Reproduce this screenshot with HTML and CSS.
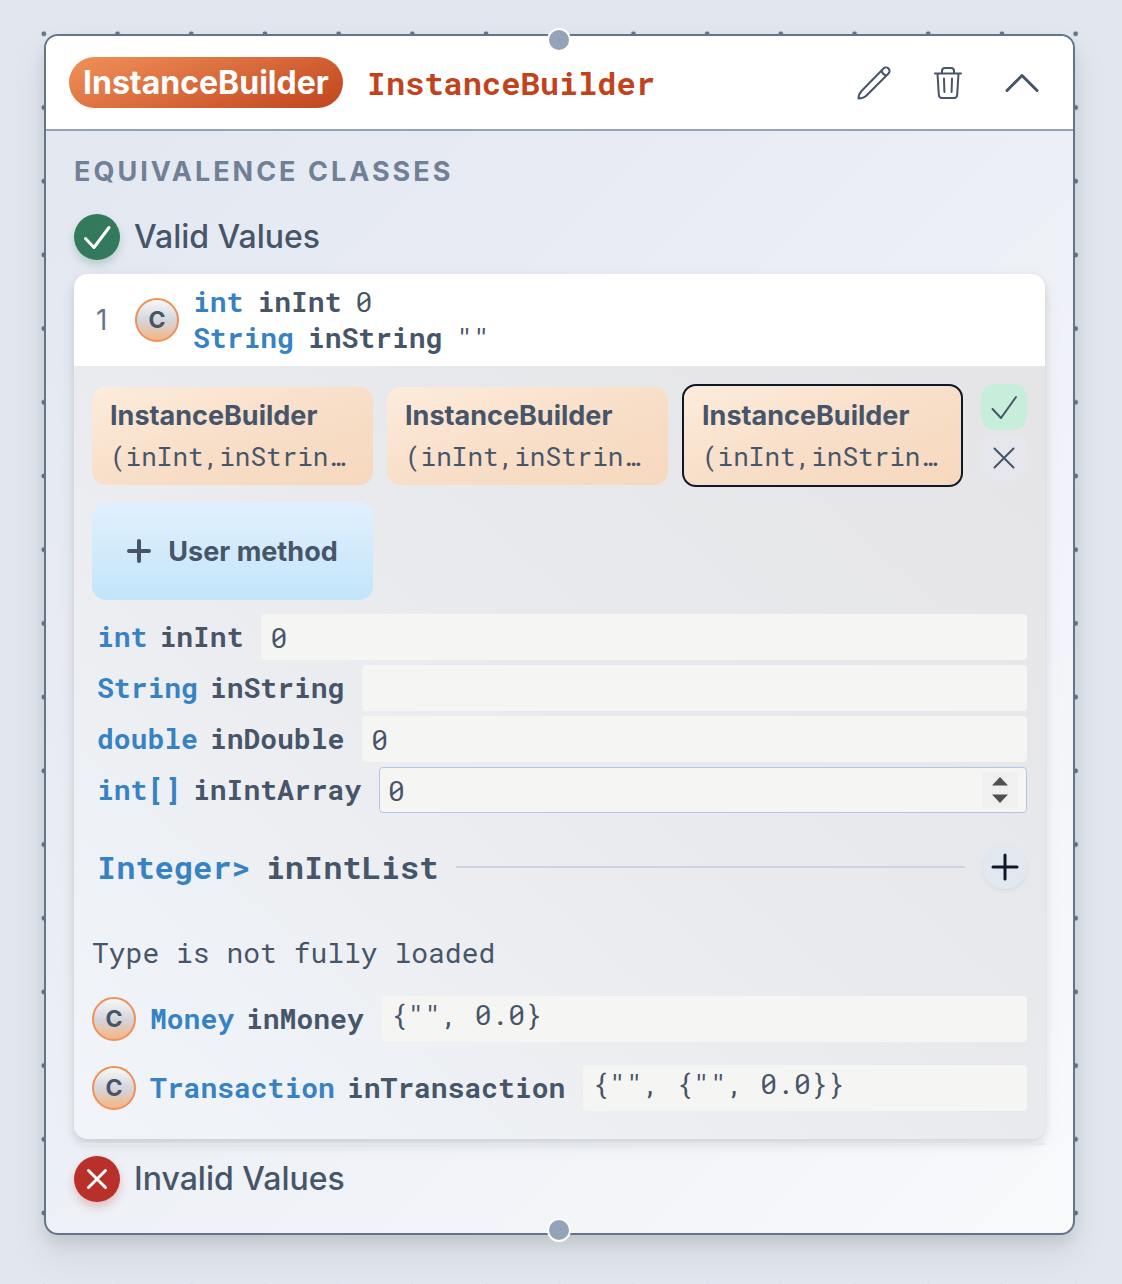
FILE: index.html
```html
<!DOCTYPE html>
<html lang="en">
<head>
<meta charset="utf-8">
<title>InstanceBuilder</title>
<meta name="viewport" content="width=device-width, initial-scale=1">
<link rel="stylesheet" href="styles.css">
</head>
<body>
<svg class="canvas-dots" aria-hidden="true">
  <defs>
    <pattern id="dots" width="40" height="40" patternUnits="userSpaceOnUse" patternTransform="translate(7 -3) scale(1.8425)">
      <circle cx="20" cy="20" r="1.3" fill="#64748b"/>
    </pattern>
  </defs>
  <rect width="100%" height="100%" fill="url(#dots)"/>
</svg>

<main class="node">
  <span class="handle handle-top"></span>
  <span class="handle handle-bottom"></span>

  <header class="node-header">
    <span class="badge">InstanceBuilder</span>
    <h1 class="node-title">InstanceBuilder</h1>
    <div class="tools">
      <button class="tool" type="button" aria-label="Edit">
        <svg viewBox="0 0 38 38" class="icon"><path d="M3.500 34.500c0-3 1-5.500 3.500-8L28.500 4.500a3.300 3.300 0 0 1 5 5L12 31c-2.500 2.500-5 3.500-8.500 3.500zM26.500 6.500c.5 2.500 2 4 4.500 5"/></svg>
      </button>
      <button class="tool" type="button" aria-label="Delete">
        <svg viewBox="0 0 38 38" class="icon"><path d="M6 9.500h26M8.500 9.500l1.300 21c.1 2.200 1.300 3.500 3.200 3.500h12c1.900 0 3.100-1.300 3.200-3.500l1.300-21M13 9.500V7c0-2 1-3 3-3h6c2 0 3 1 3 3v2.500M15 14.500l.4 13.500M23 14.500l-.4 13.500"/></svg>
      </button>
      <button class="tool" type="button" aria-label="Collapse">
        <svg viewBox="0 0 38 38" class="icon icon-bold"><path d="M4 26.500l15-15 15 15"/></svg>
      </button>
    </div>
  </header>

  <div class="node-body">
    <h2 class="section-title">EQUIVALENCE CLASSES</h2>

    <div class="group">
      <span class="status status-valid"><svg viewBox="0 0 46 46" class="icon"><path d="M11.500 24.500l8.500 9L35 13.500"/></svg></span>
      <h3 class="group-title">Valid Values</h3>
    </div>

    <section class="case">
      <div class="case-head">
        <span class="case-index">1</span>
        <span class="class-mark">C</span>
        <div class="summary">
          <div class="summary-line"><b class="type">int</b><b>inInt</b><span>0</span></div>
          <div class="summary-line"><b class="type">String</b><b>inString</b><span>""</span></div>
        </div>
      </div>

      <div class="case-body">
        <div class="picker">
          <div class="methods">
            <button class="method" type="button"><span class="method-name">InstanceBuilder</span><span class="method-args">(inInt,inStrin…</span></button>
            <button class="method" type="button"><span class="method-name">InstanceBuilder</span><span class="method-args">(inInt,inStrin…</span></button>
            <button class="method method-selected" type="button"><span class="method-name">InstanceBuilder</span><span class="method-args">(inInt,inStrin…</span></button>
            <button class="method method-user" type="button"><svg viewBox="0 0 24 24" class="icon icon-plus"><path d="M12 2v20M2 12h20"/></svg>User method</button>
          </div>
          <div class="actions">
            <button class="action action-accept" type="button" aria-label="Accept"><svg viewBox="0 0 46 46" class="icon"><path d="M11.500 25l8.500 9L35 13"/></svg></button>
            <button class="action" type="button" aria-label="Cancel"><svg viewBox="0 0 46 46" class="icon"><path d="M13.500 13.500l19 19M32.500 13.500l-19 19"/></svg></button>
          </div>
        </div>

        <form class="fields">
          <div class="field"><label class="param" for="in-int"><span class="type">int</span><span>inInt</span></label><input id="in-int" type="text" value="0"></div>
          <div class="field"><label class="param" for="in-string"><span class="type">String</span><span>inString</span></label><input id="in-string" type="text"></div>
          <div class="field"><label class="param" for="in-double"><span class="type">double</span><span>inDouble</span></label><input id="in-double" type="text" value="0"></div>
          <div class="field field-focus">
            <label class="param" for="in-array"><span class="type">int[]</span><span>inIntArray</span></label>
            <input id="in-array" type="text" inputmode="numeric" value="0">
            <span class="stepper"><svg viewBox="0 0 36 36"><path d="M10 13.500L18 5l8 8.500zM10 22.500L18 31l8-8.500z" fill="#505050"/></svg></span>
          </div>
        </form>

        <div class="list-row">
          <h4 class="param list-title"><span class="type">Integer&gt;</span><span>inIntList</span></h4>
          <span class="rule"></span>
          <button class="add" type="button" aria-label="Add item"><svg viewBox="0 0 44 44" class="icon icon-bold"><path d="M22 10v24M10 22h24"/></svg></button>
        </div>

        <p class="note">Type is not fully loaded</p>

        <div class="object-row"><span class="class-mark">C</span><div class="field object-field"><span class="param"><span class="type">Money</span><span>inMoney</span></span><output class="object-value">{"", 0.0}</output></div></div>
        <div class="object-row"><span class="class-mark">C</span><div class="field object-field"><span class="param"><span class="type">Transaction</span><span>inTransaction</span></span><output class="object-value">{"", {"", 0.0}}</output></div></div>
      </div>
    </section>

    <hr class="divider">

    <div class="group">
      <span class="status status-invalid"><svg viewBox="0 0 46 46" class="icon"><path d="M14.500 14.500l17 17M31.500 14.500l-17 17"/></svg></span>
      <h3 class="group-title">Invalid Values</h3>
    </div>
  </div>
</main>
</body>
</html>
```
FILE: styles.css
```css
:root {
  --ink: #475569;
  --blue: #3682c4;
  --sans: Inter, "Liberation Sans", sans-serif;
  --mono: "Roboto Mono", "DejaVu Sans Mono", "Liberation Mono", monospace;
}

* { box-sizing: border-box; }

body {
  margin: 0;
  padding: 34px 47px 48px 44px;
  background: #e2e7ef;
  color: var(--ink);
  font-family: var(--sans);
  font-size: 28px;
}

h1, h2, h3, h4, p { margin: 0; }

button {
  border: 0;
  padding: 0;
  background: none;
  color: inherit;
  font: inherit;
  cursor: pointer;
}

.canvas-dots {
  position: absolute;
  inset: 0;
  width: 100%;
  height: 100%;
}

.icon {
  display: block;
  width: 100%;
  height: 100%;
  fill: none;
  stroke: currentColor;
  stroke-width: 2;
  stroke-linecap: round;
  stroke-linejoin: round;
}

.icon-bold { stroke-width: 3; }

/* Node frame */
.node {
  position: relative;
  border: 2px solid #64748b;
  border-radius: 14px;
  background: linear-gradient(135deg, #e2e8f0, #e8ebf3 30%, #f8fafc);
  box-shadow: 0 9px 14px rgba(0, 0, 0, .08), 0 18px 36px rgba(0, 0, 0, .08);
}

.handle {
  position: absolute;
  left: 50%;
  width: 24px;
  height: 24px;
  margin-left: -13px;
  border: 2px solid #fff;
  border-radius: 50%;
  background: #94a3b8;
}

.handle-top { top: -8px; }
.handle-bottom { bottom: -9px; }

.node-header {
  display: flex;
  align-items: center;
  gap: 24px;
  height: 95px;
  padding: 0 32px 0 23px;
  border-bottom: 2px solid #94a3b8;
  border-radius: 12px 12px 0 0;
  background: #fff;
}

.badge {
  padding: 0 14px;
  border-radius: 26px;
  background: linear-gradient(160deg, #f19159, #c0441e);
  color: #fff;
  font-size: 32px;
  font-weight: 700;
  line-height: 51px;
}

.node-title {
  color: #c2421c;
  font-family: var(--mono);
  font-size: 32px;
  font-weight: 700;
}

.tools {
  display: flex;
  gap: 36px;
  margin-left: auto;
}

.tool {
  width: 38px;
  height: 38px;
}

.node-body { padding: 23px 28px 31px; }

.section-title {
  margin-bottom: 24px;
  color: #718096;
  font-size: 27px;
  font-weight: 700;
  letter-spacing: 3px;
  line-height: 36px;
}

.group {
  display: flex;
  align-items: center;
  gap: 14px;
}

.group-title {
  font-size: 32px;
  font-weight: 500;
  line-height: 46px;
}

.status {
  width: 46px;
  height: 46px;
  border-radius: 50%;
  color: #fff;
}

.status .icon { stroke-width: 3; }

.status-valid {
  background: #327a5b;
  box-shadow: 0 5px 8px rgba(50, 122, 91, .25);
}

.status-invalid {
  background: #b9302a;
  box-shadow: 0 5px 8px rgba(185, 48, 42, .25);
}

/* Test case panel */
.case {
  margin-top: 14px;
  border-radius: 14px;
  background: linear-gradient(to top right, #f1f5f9, #e9eaee 50%, #e4e4e5);
  box-shadow: 0 4px 8px rgba(0, 0, 0, .1), 0 6px 18px rgba(0, 0, 0, .06);
}

.case-head {
  display: flex;
  align-items: center;
  height: 92px;
  padding: 0 22px;
  border-radius: 14px 14px 0 0;
  background: #fff;
}

.case-index {
  width: 39px;
  color: #64748b;
}

.class-mark {
  flex: none;
  width: 44px;
  height: 44px;
  border: 2px solid #f28f56;
  border-radius: 50%;
  background: linear-gradient(#f8f8f8, #d3d6dc 50%, #f6b584);
  font-size: 23px;
  font-weight: 700;
  line-height: 40px;
  text-align: center;
}

.summary {
  margin-left: 14px;
  font-family: var(--mono);
  line-height: 36px;
}

.summary-line {
  display: flex;
  gap: 14px;
}

.type { color: var(--blue); }

.case-body { padding: 18px 18px 28px; }

.picker {
  display: flex;
  gap: 18px;
}

.methods {
  flex: 1;
  display: grid;
  grid-template-columns: repeat(3, 1fr);
  align-items: center;
  gap: 15px 14px;
}

.method {
  height: 98px;
  min-width: 0;
  padding: 0 18px;
  overflow: hidden;
  border-radius: 14px;
  background: linear-gradient(to bottom right, #fdecdc, #f8dfc9 50%, #f6d8bd);
  text-align: left;
  white-space: nowrap;
}

.method-name {
  display: block;
  font-size: 27px;
  font-weight: 700;
  line-height: 41px;
}

.method-args {
  display: block;
  font-family: var(--mono);
  font-size: 26px;
  line-height: 41px;
}

.method-selected {
  height: 103px;
  border: 2px solid #0f172a;
}

.method-user {
  display: flex;
  align-items: center;
  justify-content: center;
  gap: 17px;
  background: linear-gradient(#e2f0fd, #c2e5fa);
  font-size: 27px;
  font-weight: 700;
}

.icon-plus {
  width: 24px;
  height: 24px;
  stroke-width: 4;
}

.actions {
  display: flex;
  flex-direction: column;
  gap: 5px;
}

.action {
  width: 46px;
  height: 46px;
  border-radius: 14px;
  background: #e5e7ec;
}

.action-accept { background: #c6eedb; }

/* Parameter fields */
.fields {
  display: flex;
  flex-direction: column;
  gap: 5px;
  margin-top: 14px;
}

.field {
  position: relative;
  display: flex;
  align-items: center;
  gap: 18px;
  padding-left: 5px;
  font-family: var(--mono);
}

.param {
  display: flex;
  gap: 12px;
  font-family: var(--mono);
  font-weight: 700;
  line-height: 36px;
}

.field input {
  flex: 1;
  min-width: 0;
  height: 46px;
  padding: 0 8px;
  border: 1px solid transparent;
  border-radius: 4px;
  outline: 0;
  background: #f5f5f3 border-box;
  color: inherit;
  font: inherit;
}

.field-focus input { border-color: #b4c6f0; }

.stepper {
  position: absolute;
  top: 5px;
  right: 9px;
  width: 36px;
  height: 36px;
  background: #f0f0f0;
}

.stepper svg { display: block; }

.list-row {
  display: flex;
  align-items: center;
  gap: 18px;
  margin-top: 32px;
  padding-left: 5px;
}

.list-title {
  gap: 15px;
  font-size: 32px;
}

.rule {
  flex: 1;
  height: 2px;
  background: #cbd5e1;
}

.add {
  width: 44px;
  height: 44px;
  border-radius: 50%;
  background: #e2e8f0;
  box-shadow: 0 2px 4px rgba(0, 0, 0, .06);
  color: #0f172a;
}

.note {
  margin: 46px 0 25px;
  font-family: var(--mono);
  line-height: 36px;
}

.object-row {
  display: flex;
  align-items: center;
  gap: 14px;
}

.object-row + .object-row { margin-top: 23px; }

.object-field {
  flex: 1;
  padding-left: 0;
}

.object-value {
  flex: 1;
  height: 46px;
  padding: 0 9px;
  border-radius: 4px;
  background: #f5f5f3;
  line-height: 38px;
}

.divider {
  height: 2px;
  margin: 4px 0 11px;
  border: 0;
  background: #e2e8f0;
}
```
